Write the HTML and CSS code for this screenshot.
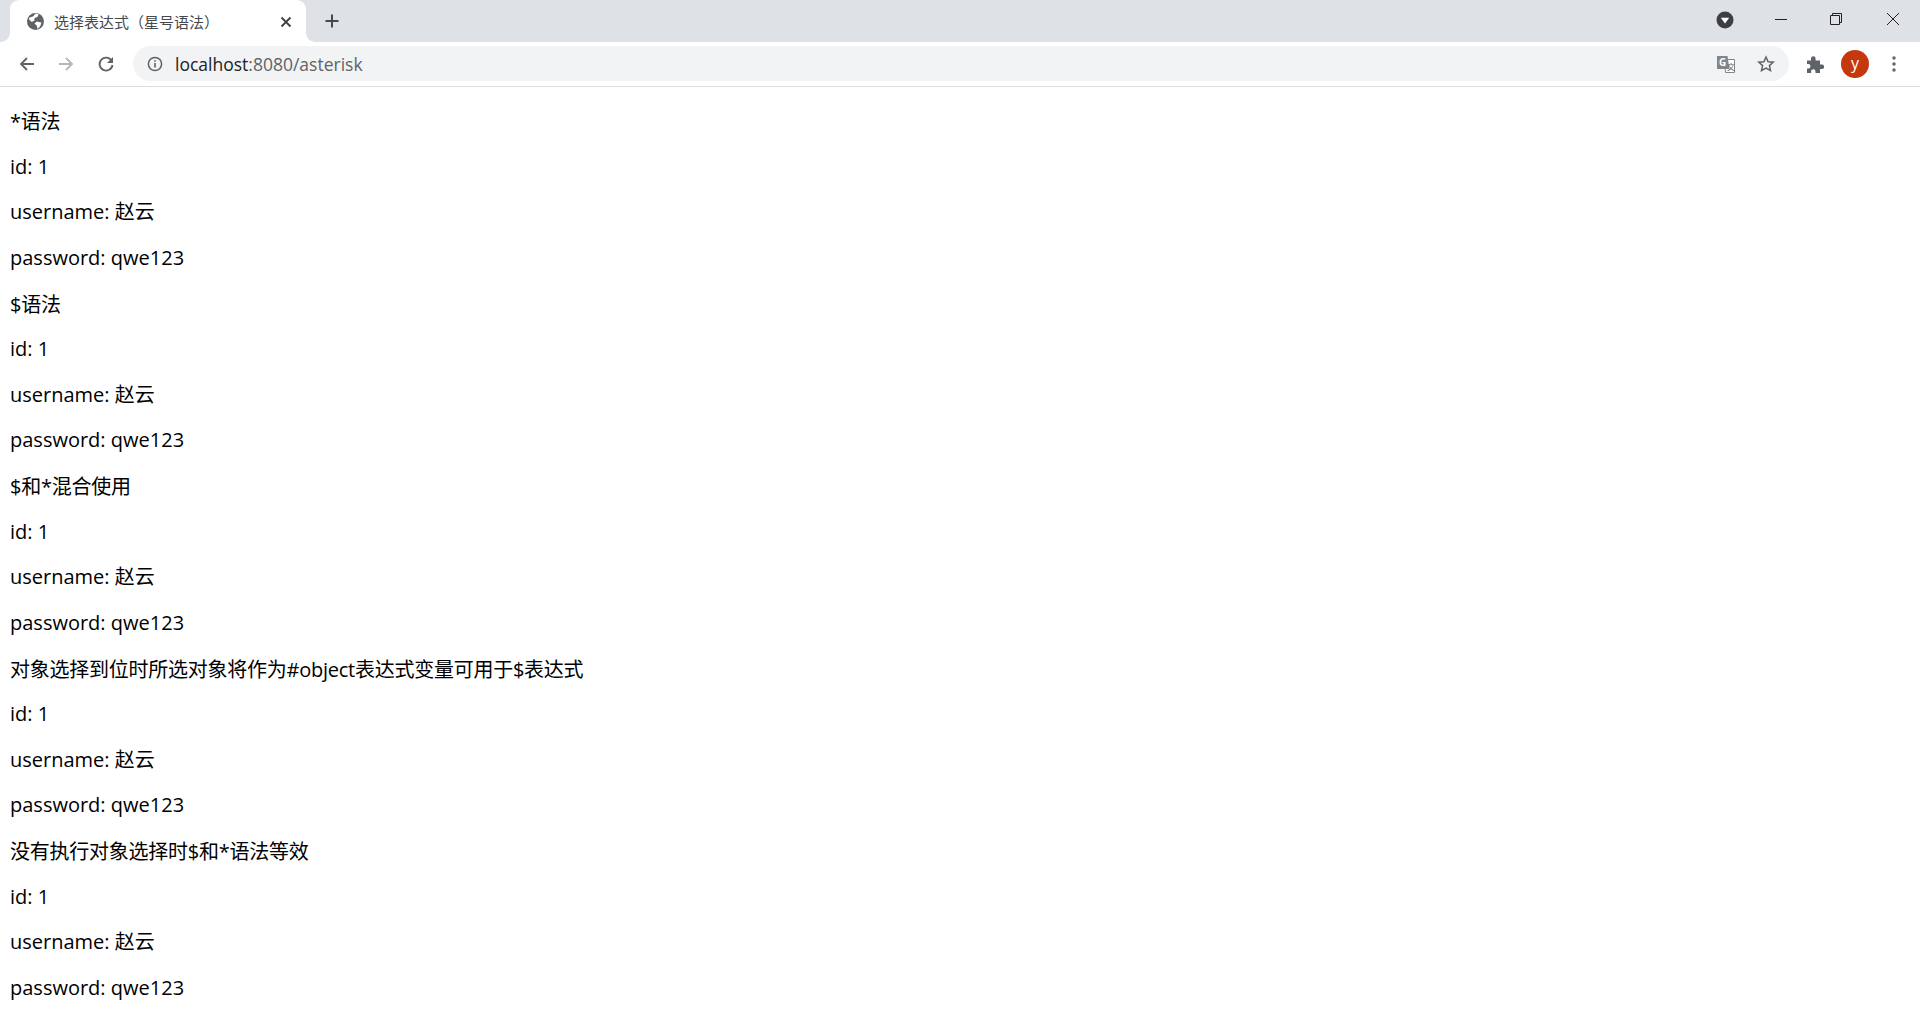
FILE: index.html
```html
<!DOCTYPE html>
<html lang="zh">
<head>
<meta charset="utf-8">
<title>选择表达式（星号语法）</title>
<link rel="stylesheet" href="styles.css">
</head>
<body>
<header class="chrome">
  <div class="tabstrip">
    <div class="tab">
      <svg class="favicon" viewBox="0 0 16 16"><circle cx="8" cy="8" r="8" fill="#5f6368"/><path d="M2 4.500 6 3l2-2.500 3 .5-1 2.500-3 1.500v2L4.500 8.500 2 6zM9 8l4.500 1-1 3.500L10 15l-1-3.500-2-1.500z" fill="#fff"/></svg>
      <span class="tab-title">选择表达式（星号语法）</span>
      <svg class="tab-close" viewBox="0 0 12 12"><path d="M1.500 1.500l9 9m0-9l-9 9" stroke="#3c4043" stroke-width="1.800" fill="none"/></svg>
    </div>
    <svg class="newtab" viewBox="0 0 16 16"><path d="M8 1.500v13M1.500 8h13" stroke="#45494d" stroke-width="2" fill="none"/></svg>
    <div class="spacer"></div>
    <div class="winctl">
      <svg class="media" viewBox="0 0 18 18"><circle cx="9" cy="9" r="8.500" fill="#3c4043"/><path d="M4.800 6.800h8.400L9 12.500z" fill="#fff"/></svg>
      <svg class="wbtn" viewBox="0 0 14 14"><path d="M1 7.500h12" stroke="#222" stroke-width="1" fill="none"/></svg>
      <svg class="wbtn" viewBox="0 0 14 14"><path d="M1.500 3.500h9v9h-9zM3.500 3.500v-2h9v9h-2" stroke="#222" stroke-width="1" fill="none"/></svg>
      <svg class="wbtn" viewBox="0 0 14 14"><path d="M1 1l12 12M13 1L1 13" stroke="#222" stroke-width="1" fill="none"/></svg>
    </div>
  </div>
  <div class="toolbar">
    <svg class="navicon" viewBox="0 0 18 18"><path d="M16 9H3M9 3L3 9l6 6" stroke="#5f6368" stroke-width="1.800" fill="none"/></svg>
    <svg class="navicon" viewBox="0 0 18 18"><path d="M2 9h13M9 3l6 6-6 6" stroke="#b4b7bb" stroke-width="1.800" fill="none"/></svg>
    <svg class="navicon" viewBox="0 0 18 18"><path d="M14.800 6A6.500 6.500 0 1 0 15.500 10" stroke="#5f6368" stroke-width="1.800" fill="none"/><path d="M16 2v6h-6z" fill="#5f6368"/></svg>
    <div class="omnibox">
      <svg class="info" viewBox="0 0 16 16"><circle cx="8" cy="8" r="6.600" stroke="#5f6368" stroke-width="1.500" fill="none"/><path d="M8 7v4.500M8 4.300v1.500" stroke="#5f6368" stroke-width="1.600" fill="none"/></svg>
      <span class="url"><span class="host">localhost</span>:8080/asterisk</span>
      <svg class="translate" viewBox="0 0 18 18"><path d="M7.500 4.500h10v13H8.500z" fill="#fff" stroke="#80868b" stroke-width="1"/><path d="M0 1h10.500l2 13H0z" fill="#80868b"/><text class="t-g" x="2" y="11">G</text><text class="t-z" x="10" y="15">文</text></svg>
      <svg class="star" viewBox="0 0 18 18"><path d="M9 2l2.100 4.700 5.100.5-3.800 3.400 1.100 5L9 13l-4.500 2.600 1.100-5L1.800 7.200l5.100-.5z" stroke="#5f6368" stroke-width="1.500" fill="none"/></svg>
    </div>
    <svg class="puzzle" viewBox="0 0 18 18"><path d="M1 5.500h4V3.500a2.300 2.300 0 0 1 4.600 0v2h4.400v4h1.800a2.300 2.300 0 0 1 0 4.600H14V18H9.500v-1.500a2.200 2.200 0 0 0-4.400 0V18H1v-4.500h1.300a2.200 2.200 0 0 0 0-4.400H1z" fill="#5f6368"/></svg>
    <div class="avatar">y</div>
    <svg class="kebab" viewBox="0 0 4 16"><circle cx="2" cy="2" r="1.700" fill="#5f6368"/><circle cx="2" cy="8" r="1.700" fill="#5f6368"/><circle cx="2" cy="14" r="1.700" fill="#5f6368"/></svg>
  </div>
</header>
<main class="page">
  <p class="head">*语法</p><p>id: 1</p><p>username: 赵云</p><p>password: qwe123</p>
  <p class="head">$语法</p><p>id: 1</p><p>username: 赵云</p><p>password: qwe123</p>
  <p class="head">$和*混合使用</p><p>id: 1</p><p>username: 赵云</p><p>password: qwe123</p>
  <p class="head">对象选择到位时所选对象将作为#object表达式变量可用于$表达式</p><p>id: 1</p><p>username: 赵云</p><p>password: qwe123</p>
  <p class="head">没有执行对象选择时$和*语法等效</p><p>id: 1</p><p>username: 赵云</p><p>password: qwe123</p>
</main>
</body>
</html>
```
FILE: styles.css
```css
* { box-sizing: border-box; }
html, body { margin: 0; height: 100%; overflow: hidden; background: #fff; }
body { font-family: "Open Sans", "Noto Sans CJK SC", sans-serif; color: #000; }
.chrome { display: flex; flex-direction: column; height: 87px; border-bottom: 1px solid #dadce0; }
.tabstrip { display: flex; align-items: center; height: 42px; background: #dee1e6; padding-left: 10px; flex: none; }
.tab { position: relative; display: flex; align-items: center; align-self: stretch; width: 296px; background: #fff; border-radius: 9px 9px 0 0; padding: 0 14px 0 16px; }
.tab::before, .tab::after { content: ""; position: absolute; bottom: 0; width: 9px; height: 9px; }
.tab::before { left: -9px; background: radial-gradient(circle at 0 0, #dee1e6 8.500px, #fff 9px); }
.tab::after { right: -9px; background: radial-gradient(circle at 100% 0, #dee1e6 8.500px, #fff 9px); }
.favicon { width: 17px; height: 17px; flex: none; margin-top: 1px; margin-left: 1px; }
.tab-title { margin-left: 10px; flex: 1; font: 15px "Noto Sans CJK SC", sans-serif; color: #45494d; white-space: nowrap; }
.tab-close { width: 12px; height: 12px; flex: none; margin-top: 1px; }
.newtab { width: 16px; height: 16px; margin-left: 18px; flex: none; }
.spacer { flex: 1; }
.winctl { display: flex; align-items: center; align-self: flex-start; height: 37px; padding-right: 20px; }
.media { width: 18px; height: 18px; margin-top: 3px; }
.wbtn { width: 14px; height: 14px; margin-left: 41px; }
.wbtn:nth-child(2) { margin-left: 40px; }
.wbtn:nth-child(4) { margin-left: 43px; }
.toolbar { display: flex; align-items: center; flex: 1; background: #fff; padding: 0 0 1px 18px; }
.navicon { width: 18px; height: 18px; margin-right: 21px; flex: none; }
.navicon:nth-child(2) { margin-right: 22px; }
.navicon:nth-child(3) { margin-right: 18px; }
.omnibox { display: flex; align-items: center; width: 1656px; height: 35px; border-radius: 18px; background: #f1f3f4; padding: 0 14px 0 14px; flex: none; }
.info { width: 16px; height: 16px; flex: none; }
.url { margin-left: 12px; flex: 1; font: 17.500px "Open Sans", sans-serif; color: #5f6368; }
.host { color: #202124; }
.translate { width: 18px; height: 18px; flex: none; margin-right: 22px; }
.t-g { font: bold 10px "Open Sans", sans-serif; fill: #fff; }
.t-z { font: 8px "Noto Sans CJK SC", sans-serif; fill: #5f6368; }
.star { width: 18px; height: 18px; flex: none; }
.puzzle { width: 18px; height: 18px; margin-left: 17px; flex: none; }
.avatar { width: 28px; height: 28px; margin-left: 17px; border-radius: 50%; background: #c5370c; color: #fff; font: 16px/26px "Open Sans", sans-serif; text-align: center; flex: none; }
.kebab { width: 4px; height: 16px; margin-left: 23px; flex: none; }
.page { padding: 1px 10px 0; }
.page p { margin: 20px 0; font-size: 20px; line-height: 25.630px; white-space: nowrap; }
.page .head { letter-spacing: -0.25px; padding-top: 1px; margin-bottom: 19px; }
.page .head + p { margin-top: 19px; }
```
